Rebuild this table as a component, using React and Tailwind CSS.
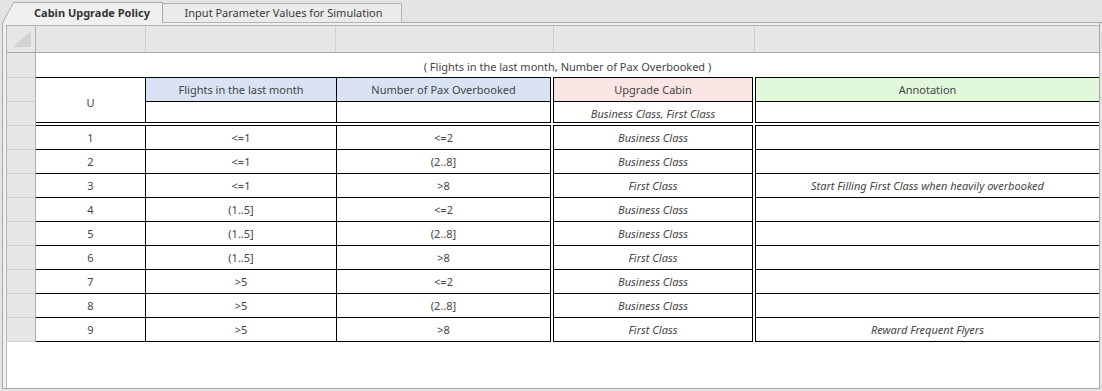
import React from "react";

const rows = [
  ["1", "<=1", "<=2", "Business Class", ""],
  ["2", "<=1", "(2..8]", "Business Class", ""],
  ["3", "<=1", ">8", "First Class", "Start Filling First Class when heavily overbooked"],
  ["4", "(1..5]", "<=2", "Business Class", ""],
  ["5", "(1..5]", "(2..8]", "Business Class", ""],
  ["6", "(1..5]", ">8", "First Class", ""],
  ["7", ">5", "<=2", "Business Class", ""],
  ["8", ">5", "(2..8]", "Business Class", ""],
  ["9", ">5", ">8", "First Class", "Reward Frequent Flyers"],
];

function ActiveTab() {
  return (
    <div className="relative w-[161px] h-[21px] flex items-center pl-[32px] pb-[1px]">
      <svg className="absolute inset-0" width="161" height="21" viewBox="0 0 161 21">
        <path d="M0 21 L11 0 H161 V21 Z" fill="#f0f0f0" />
        <path d="M0.5 21 L11.5 0.5 H160.5 V21" fill="none" stroke="#a9a9a9" strokeWidth="1" />
      </svg>
      <span className="relative font-bold text-[#333]">Cabin Upgrade Policy</span>
    </div>
  );
}

export default function App() {
  return (
    <div className="w-[1102px] h-[391px] bg-[#e4e4e4] overflow-hidden font-['Noto_Sans','Open_Sans',sans-serif] text-[11px] leading-none text-[#454545]">
      {/* tab strip */}
      <div className="h-[23px] flex items-end pl-[2px]">
        <ActiveTab />
        <div className="w-[239px] h-[20px] flex items-center justify-center pl-[3px] pb-[1px] bg-[#ebebeb] border-t border-r border-b border-[#b4b4b4] rounded-tr-[2px] text-[#3a3a3a]">
          Input Parameter Values for Simulation
        </div>
        <div className="flex-1 h-[1px] bg-[#a9a9a9]" />
      </div>

      {/* panel */}
      <div className="ml-[2px] w-[1098px] h-[366px] border-l border-r border-b border-[#a9a9a9] bg-[#f0f0f0] pl-[3px] pt-[2px]">
        <div className="w-[1093px] h-[363px] flex flex-col border-l border-t border-[#b5b5b5] bg-white">
          {/* column header row */}
          <div className="h-[27px] flex bg-[#e6e6e6] border-b border-[#a6a6a6]">
            <div className="w-[29px] border-r border-[#b0b0b0] relative">
              <svg className="absolute inset-0" width="28" height="26" viewBox="0 0 28 26">
                <polygon points="6,21 24,21 24,5" fill="#d2d2d2" />
              </svg>
            </div>
            <div className="w-[110px] border-r border-[#cfcfcf]" />
            <div className="w-[190px] border-r border-[#cfcfcf]" />
            <div className="w-[218px] border-r border-[#cfcfcf]" />
            <div className="w-[201px] border-r border-[#cfcfcf]" />
            <div className="flex-1" />
          </div>

          {/* body */}
          <div className="flex-1 flex items-start">
            {/* row headers */}
            <div className="w-[29px] flex flex-col bg-[#e6e6e6] border-r border-[#b0b0b0]">
              <div className="h-[25px] border-b border-[#d0d0d0]" />
              <div className="h-[24px] border-b border-[#d0d0d0]" />
              <div className="h-[24px] border-b border-[#d0d0d0]" />
              {rows.map((r, i) => (
                <div key={i} className="h-[24px] border-b border-[#d0d0d0]" />
              ))}
            </div>

            {/* data */}
            <div className="flex-1 flex flex-col">
              <div className="h-[24px] flex items-center justify-center pt-[2px]">
                ( Flights in the last month, Number of Pax Overbooked )
              </div>

              {/* header block */}
              <div className="h-[46px] flex">
                <div className="w-[515px] flex border-t border-r border-b border-black">
                  <div className="w-[110px] border-r border-black flex items-center justify-center pt-[4px]">U</div>
                  <div className="flex-1 flex flex-col">
                    <div className="h-[24px] flex border-b border-black bg-[#d9e3f4]">
                      <div className="w-[191px] border-r border-black flex items-center justify-center">Flights in the last month</div>
                      <div className="flex-1 flex items-center justify-center">Number of Pax Overbooked</div>
                    </div>
                    <div className="flex-1 flex">
                      <div className="w-[191px] border-r border-black" />
                      <div className="flex-1" />
                    </div>
                  </div>
                </div>
                <div className="w-[2px]" />
                <div className="w-[200px] flex flex-col border border-black">
                  <div className="h-[24px] flex items-center justify-center border-b border-black bg-[#fbe4e4]">Upgrade Cabin</div>
                  <div className="flex-1 flex items-center justify-center italic pt-[2px]">Business Class, First Class</div>
                </div>
                <div className="w-[2px]" />
                <div className="flex-1 flex flex-col border-t border-l border-b border-black">
                  <div className="h-[24px] flex items-center justify-center border-b border-black bg-[#e1f9da]">Annotation</div>
                  <div className="flex-1" />
                </div>
              </div>

              <div className="h-[2px]" />

              {/* body block */}
              <div className="flex">
                <div className="w-[515px] flex flex-col border-t border-r border-black">
                  {rows.map((r, i) => (
                    <div key={i} className="h-[24px] flex border-b border-black">
                      <div className="w-[110px] border-r border-black flex items-center justify-center">{r[0]}</div>
                      <div className="w-[191px] border-r border-black flex items-center justify-center">{r[1]}</div>
                      <div className="flex-1 flex items-center justify-center">{r[2]}</div>
                    </div>
                  ))}
                </div>
                <div className="w-[2px]" />
                <div className="w-[200px] flex flex-col border-t border-l border-r border-black">
                  {rows.map((r, i) => (
                    <div key={i} className="h-[24px] flex items-center justify-center italic border-b border-black">{r[3]}</div>
                  ))}
                </div>
                <div className="w-[2px]" />
                <div className="flex-1 flex flex-col border-t border-l border-black">
                  {rows.map((r, i) => (
                    <div key={i} className="h-[24px] flex items-center justify-center italic border-b border-black">{r[4]}</div>
                  ))}
                </div>
              </div>
            </div>
          </div>
        </div>
      </div>
    </div>
  );
}
